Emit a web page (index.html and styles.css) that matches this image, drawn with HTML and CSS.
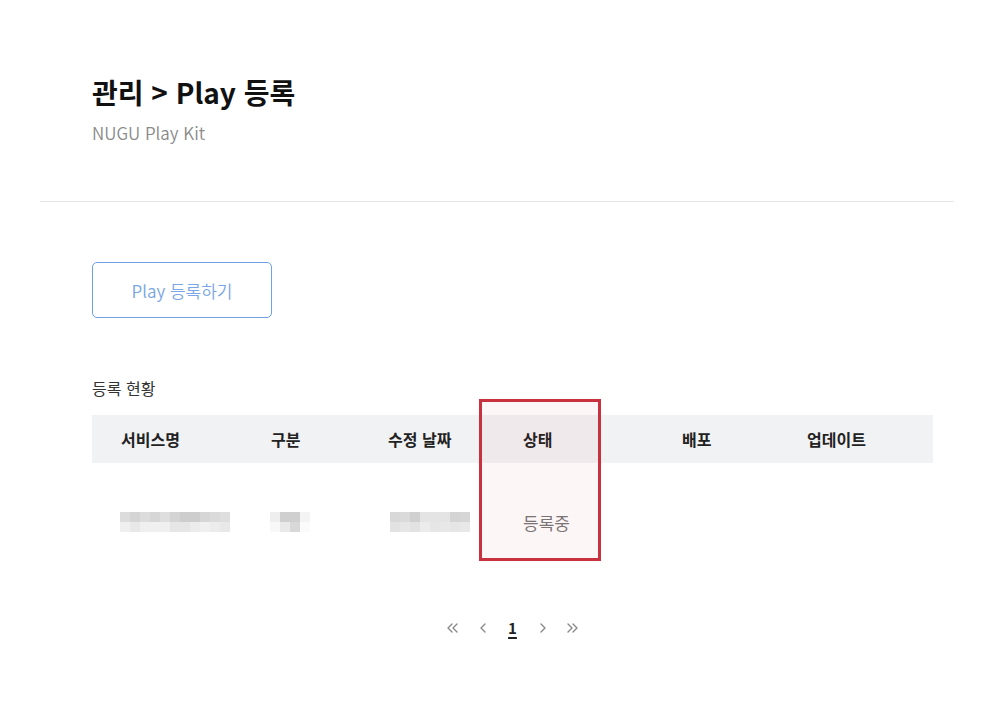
FILE: index.html
```html
<!DOCTYPE html>
<html lang="ko">
<head>
<meta charset="utf-8">
<title>Play 등록</title>
<link rel="stylesheet" href="styles.css">
</head>
<body>
<div class="page">
  <header class="head">
    <h1 class="title">관리 &gt; Play 등록</h1>
    <p class="subtitle">NUGU Play Kit</p>
  </header>
  <main class="content">
    <button class="btn-register" type="button">Play 등록하기</button>
    <h2 class="section-title">등록 현황</h2>
    <div class="table-wrap">
      <div class="table">
        <div class="thead">
          <div class="th">서비스명</div>
          <div class="th">구분</div>
          <div class="th">수정 날짜</div>
          <div class="th">상태</div>
          <div class="th">배포</div>
          <div class="th">업데이트</div>
        </div>
        <div class="trow">
          <div class="td"><span class="blur blur-name"></span></div>
          <div class="td"><span class="blur blur-type"></span></div>
          <div class="td"><span class="blur blur-date"></span></div>
          <div class="td status">등록중</div>
          <div class="td"></div>
          <div class="td"></div>
        </div>
      </div>
      <div class="highlight"></div>
    </div>
    <nav class="pager">
      <span class="pg arrow"><svg width="14" height="12" viewBox="0 0 14 12"><polyline points="6,2 2,6 6,10" /><polyline points="11,2 7,6 11,10" /></svg></span>
      <span class="pg arrow"><svg width="14" height="12" viewBox="0 0 14 12"><polyline points="9,2 5,6 9,10" /></svg></span>
      <span class="pg current">1</span>
      <span class="pg arrow"><svg width="14" height="12" viewBox="0 0 14 12"><polyline points="5,2 9,6 5,10" /></svg></span>
      <span class="pg arrow"><svg width="14" height="12" viewBox="0 0 14 12"><polyline points="2,2 6,6 2,10" /><polyline points="7,2 11,6 7,10" /></svg></span>
    </nav>
  </main>
</div>
</body>
</html>
```

FILE: styles.css
```css
* { box-sizing: border-box; }
html, body { margin: 0; padding: 0; background: #fff; }
body {
  font-family: "Noto Sans CJK KR", "Noto Sans", sans-serif;
  color: #222;
}
.page {
  width: 914px;
  margin: 0 40px;
}
.head {
  padding: 72px 52px 56px;
  border-bottom: 1px solid #e6e6e6;
}
.title {
  margin: 0;
  font-size: 28px;
  line-height: 40px;
  font-weight: 700;
  color: #111;
}
.subtitle {
  margin: 9px 0 0;
  font-size: 17px;
  line-height: 24px;
  font-weight: 350;
  color: #8a8a8a;
}
.content {
  padding: 60px 21px 40px 52px;
}
.btn-register {
  display: block;
  width: 180px;
  height: 56px;
  border: 1px solid #6ea1e6;
  border-radius: 5px;
  background: #fff;
  color: #78a6e6;
  font-family: inherit;
  font-size: 17px;
  font-weight: 350;
  padding: 0;
}
.section-title {
  margin: 59px 0 0;
  font-size: 16px;
  line-height: 22px;
  font-weight: 400;
  color: #333;
}
.table-wrap {
  position: relative;
  margin-top: 16px;
}
.table { width: 841px; }
.thead, .trow {
  display: grid;
  grid-template-columns: 150px 117px 135px 159px 125px 1fr;
  padding-left: 29px;
}
.thead {
  height: 48px;
  background: #f1f2f4;
  align-items: center;
}
.th {
  text-align: left;
  font-size: 16px;
  font-weight: 700;
  color: #222;
}
.trow {
  height: 118px;
  align-items: center;
}
.td {
  text-align: left;
  font-size: 16px;
  color: #777;
}
.blur {
  display: block;
  height: 20px;
}
.blur-name {
  width: 110px;
  margin-left: -1px;
  background:
    linear-gradient(to right, #dcdcdc 0 10px, #d4d4d4 10px 20px, #dcdcdc 20px 30px, #d6d6d6 30px 40px, #dedede 40px 50px, #d4d4d4 50px 60px, #cdcdcd 60px 80px, #d6d6d6 80px 90px, #dadada 90px 100px, #dedede 100px 110px) top / 110px 10px no-repeat,
    linear-gradient(to right, #efefef 0 10px, #e8e8e8 10px 20px, #efefef 20px 30px, #f0f0f0 30px 50px, #e6e6e6 50px 70px, #ececec 70px 80px, #f0f0f0 80px 90px, #ececec 90px 100px, #e8e8e8 100px 110px) bottom / 110px 10px no-repeat;
}
.blur-type {
  width: 40px;
  margin-left: -1px;
  background:
    linear-gradient(to right, #eeeeee 0 10px, #cfcfcf 10px 30px, #f4f4f4 30px 40px) top / 40px 10px no-repeat,
    linear-gradient(to right, #f8f8f8 0 10px, #e9e9e9 10px 20px, #d8d8d8 20px 30px, #fbfbfb 30px 40px) bottom / 40px 10px no-repeat;
}
.blur-date {
  width: 80px;
  margin-left: 2px;
  background:
    linear-gradient(to right, #d8d8d8 0 10px, #dadada 10px 20px, #d0d0d0 20px 30px, #e4e4e4 30px 60px, #d4d4d4 60px 70px, #d6d6d6 70px 80px) top / 80px 10px no-repeat,
    linear-gradient(to right, #e2e2e2 0 10px, #e6e6e6 10px 20px, #e2e2e2 20px 30px, #ececec 30px 40px, #e6e6e6 40px 50px, #e8e8e8 50px 60px, #e6e6e6 60px 70px, #e8e8e8 70px 80px) bottom / 80px 10px no-repeat;
}
.status { color: #777; font-size: 17px; }
.highlight {
  position: absolute;
  left: 387px;
  top: -16px;
  width: 122px;
  height: 162px;
  border: 3px solid #c8323e;
  background: rgba(200, 50, 62, 0.045);
  pointer-events: none;
}
.pager {
  display: flex;
  justify-content: center;
  align-items: center;
  margin-top: 35px;
  width: 841px;
}
.pg {
  width: 30px;
  height: 24px;
  display: flex;
  justify-content: center;
  align-items: center;
  font-size: 15px;
  line-height: 24px;
}
.pg svg polyline {
  fill: none;
  stroke: #8a8a8a;
  stroke-width: 1.4;
  stroke-linecap: round;
  stroke-linejoin: round;
}
.pg.current {
  color: #222;
  font-weight: 700;
  text-decoration: underline;
  text-underline-offset: 3px;
  text-decoration-thickness: 1.5px;
}
```
